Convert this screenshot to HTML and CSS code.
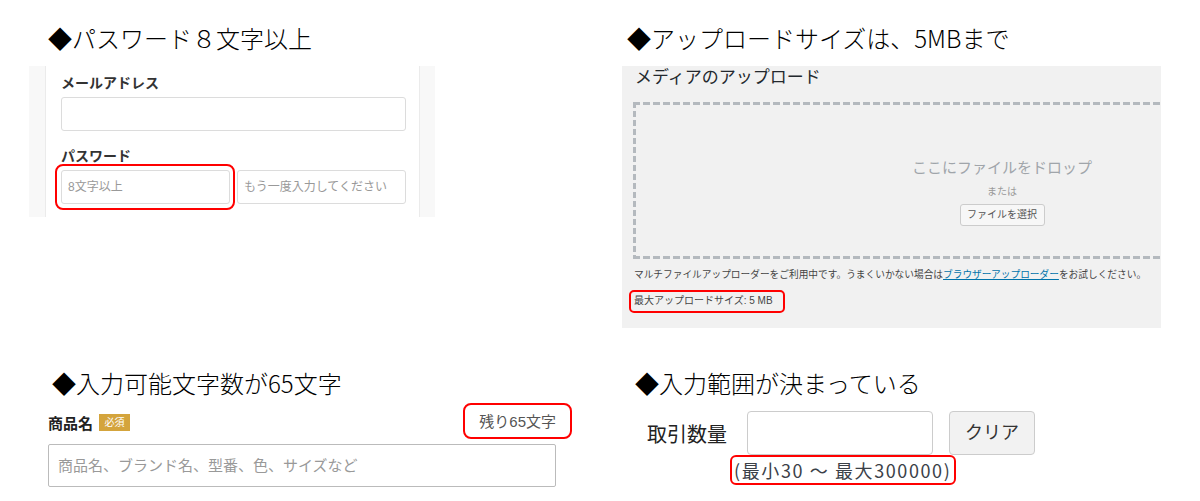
FILE: index.html
```html
<!DOCTYPE html>
<html lang="ja">
<head>
    <meta charset="UTF-8">
    <meta name="viewport" content="width=device-width, initial-scale=1.0">
    <title>入力チェックの例</title>
    <link rel="stylesheet" href="styles.css">
</head>
<body>
    <div class="page">
        <!-- パスワード -->
        <section class="cell">
            <h2 class="title title-pass">◆パスワード８文字以上</h2>
            <div class="signup">
                <div class="signup-inner">
                    <div class="field-label">メールアドレス</div>
                    <div class="text-box wide"></div>
                    <div class="field-label gap">パスワード</div>
                    <div class="pass-row">
                        <div class="text-box half mark">8文字以上</div>
                        <div class="text-box half">もう一度入力してください</div>
                    </div>
                </div>
            </div>
        </section>

        <!-- アップロード -->
        <section class="cell">
            <h2 class="title title-upload">◆アップロードサイズは、5MBまで</h2>
            <div class="media">
                <div class="media-title">メディアのアップロード</div>
                <div class="dropzone">
                    <div class="drop-text">ここにファイルをドロップ</div>
                    <div class="drop-or">または</div>
                    <div class="drop-btn">ファイルを選択</div>
                </div>
                <p class="media-note">マルチファイルアップローダーをご利用中です。うまくいかない場合は<a href="#">ブラウザーアップローダー</a>をお試しください。</p>
                <p class="media-max"><span class="max-box">最大アップロードサイズ: 5 MB</span></p>
            </div>
        </section>

        <!-- 文字数 -->
        <section class="cell">
            <h2 class="title title-count">◆入力可能文字数が65文字</h2>
            <div class="item-form">
                <div class="item-head">
                    <div class="item-label">商品名<span class="badge">必須</span></div>
                    <div class="counter">残り65文字</div>
                </div>
                <div class="item-input">商品名、ブランド名、型番、色、サイズなど</div>
            </div>
        </section>

        <!-- 範囲 -->
        <section class="cell">
            <h2 class="title title-range">◆入力範囲が決まっている</h2>
            <div class="qty-row">
                <div class="qty-label">取引数量</div>
                <div class="qty-input"></div>
                <div class="qty-btn">クリア</div>
            </div>
            <div class="range"><span class="range-box">(最小30 〜 最大300000)</span></div>
        </section>
    </div>
</body>
</html>
```

FILE: styles.css
```css
body {
    margin: 0;
    background-color: #fff;
    font-family: "Liberation Sans", "Noto Sans CJK JP", sans-serif;
    color: #000;
}
.page {
    display: grid;
    grid-template-columns: 600px 600px;
    row-gap: 41px;
    padding-top: 24px;
}
.title {
    margin: 0;
    font-family: "Noto Sans CJK JP", sans-serif;
    font-size: 24px;
    line-height: 28px;
    font-weight: 300;
    white-space: nowrap;
}
.title-pass { padding-left: 48px; }
.title-upload { padding-left: 27px; }
.title-count { padding-left: 52px; }
.title-range { padding-left: 35px; }

/* password panel */
.signup {
    margin: 14px 0 0 29px;
    width: 406px;
    height: 151px;
    background-color: #f8f8f8;
}
.signup-inner {
    margin-left: 16px;
    width: 375px;
    height: 151px;
    box-sizing: border-box;
    background-color: #fff;
    border-left: 1px solid #ebebeb;
    border-right: 1px solid #ebebeb;
    padding: 7px 0 0 15px;
}
.field-label {
    font-size: 14px;
    line-height: 20px;
    font-weight: bold;
    color: #333;
}
.field-label.gap {
    margin-top: 15px;
}
.text-box {
    box-sizing: border-box;
    height: 34px;
    margin-top: 4px;
    border: 1px solid #dcdcdc;
    border-radius: 3px;
    background-color: #fff;
    font-size: 12px;
    line-height: 32px;
    color: #999;
    padding-left: 6px;
    white-space: nowrap;
}
.text-box.wide {
    width: 345px;
}
.pass-row {
    display: flex;
    gap: 7px;
}
.text-box.half {
    width: 169px;
}
.mark {
    position: relative;
}
.mark::after {
    content: "";
    position: absolute;
    inset: -7px -6px -7px -7px;
    border: 2px solid #f00;
    border-radius: 8px;
}

/* media upload panel */
.media {
    margin: 14px 0 0 22px;
    width: 539px;
    height: 262px;
    box-sizing: border-box;
    background-color: #f1f1f1;
    padding-left: 11px;
    overflow: hidden;
}
.media-title {
    font-size: 17px;
    line-height: 24px;
    color: #23282d;
    padding-left: 2px;
}
.dropzone {
    margin-top: 12px;
    width: 738px;
    height: 157px;
    box-sizing: border-box;
    padding-top: 56px;
    text-align: center;
    background:
        repeating-linear-gradient(90deg, #b4b9be 0 7px, transparent 7px 10px) top left / 100% 3px no-repeat,
        repeating-linear-gradient(90deg, #b4b9be 0 7px, transparent 7px 10px) bottom left / 100% 3px no-repeat,
        repeating-linear-gradient(180deg, #b4b9be 0 6px, transparent 6px 9px) top left / 3px 100% no-repeat;
}
.drop-text {
    font-size: 15px;
    line-height: 20px;
    color: #a0a5aa;
}
.drop-or {
    margin-top: 7px;
    font-size: 10px;
    line-height: 14px;
    color: #999;
}
.drop-btn {
    display: inline-block;
    margin-top: 5px;
    width: 85px;
    height: 22px;
    box-sizing: border-box;
    border: 1px solid #ccc;
    border-radius: 3px;
    background-color: #f7f7f7;
    font-size: 10px;
    line-height: 20px;
    color: #555;
}
.media-note {
    margin: 9px 0 0 1px;
    font-size: 9.7px;
    line-height: 14px;
    color: #444;
    white-space: nowrap;
}
.media-note a {
    color: #0073aa;
}
.media-max {
    margin: 8px 0 0 -4px;
}
.max-box {
    display: inline-block;
    padding: 2px 10px 3px 3px;
    border: 2px solid #f00;
    border-radius: 5px;
    font-size: 10px;
    line-height: 14px;
    color: #444;
}

/* item name */
.item-form {
    margin: 13px 0 0 48px;
    width: 508px;
}
.item-head {
    display: flex;
    align-items: center;
    justify-content: space-between;
    height: 24px;
}
.item-label {
    display: flex;
    align-items: center;
    font-size: 15px;
    font-weight: bold;
    color: #222;
}
.badge {
    margin-left: 6px;
    width: 31px;
    height: 17px;
    background-color: #d4a43c;
    color: #fff;
    font-size: 10px;
    line-height: 17px;
    text-align: center;
    font-weight: normal;
}
.counter {
    margin-right: -16px;
    padding: 0 14px;
    height: 36px;
    box-sizing: border-box;
    border: 2px solid #f00;
    border-radius: 8px;
    font-size: 15px;
    line-height: 34px;
    color: #555;
    position: relative;
    top: -1px;
}
.item-input {
    margin-top: 10px;
    height: 43px;
    box-sizing: border-box;
    border: 1px solid #bbb;
    border-radius: 2px;
    padding-left: 9px;
    font-size: 15px;
    line-height: 41px;
    color: #999;
}

/* quantity */
.qty-row {
    display: flex;
    align-items: center;
    margin: 14px 0 0 47px;
}
.qty-label {
    font-size: 20px;
    color: #222;
    width: 100px;
}
.qty-input {
    width: 186px;
    height: 44px;
    box-sizing: border-box;
    border: 1px solid #ccc;
    border-radius: 4px;
    background-color: #fff;
}
.qty-btn {
    margin-left: 16px;
    width: 86px;
    height: 44px;
    box-sizing: border-box;
    border: 1px solid #ccc;
    border-radius: 4px;
    background-color: #f2f2f2;
    font-size: 18px;
    line-height: 42px;
    text-align: center;
    color: #333;
}
.range {
    margin-left: 130px;
}
.range-box {
    display: inline-block;
    padding: 0 3px 0 2px;
    height: 30px;
    box-sizing: border-box;
    border: 2px solid #f00;
    border-radius: 6px;
    font-family: "Noto Sans CJK JP", sans-serif;
    font-size: 18px;
    line-height: 26px;
    letter-spacing: 1.6px;
    color: #3b4148;
    white-space: nowrap;
}
```
